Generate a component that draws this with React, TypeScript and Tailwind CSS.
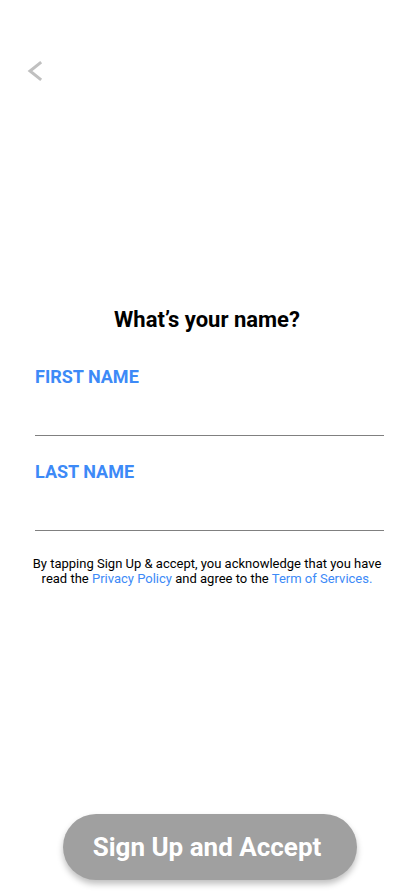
export default function App() {
  return (
    <div className="w-[414px] h-[896px] bg-white flex flex-col" style={{ fontFamily: 'Roboto, "Liberation Sans", sans-serif' }}>
      {/* Back */}
      <div className="pt-[60px] pl-[26px]">
        <button className="w-[18px] h-[22px] flex items-center justify-center">
          <svg width="18" height="22" viewBox="0 0 18 22" fill="none" stroke="#c0c0c0" strokeWidth="3" strokeLinecap="square">
            <path d="M14 3L4 11l10 8" />
          </svg>
        </button>
      </div>

      <h1 className="mt-[224px] text-center text-[22px] leading-[28px] font-bold text-black">What’s your name?</h1>

      <div className="px-[35px] pr-[30px]">
        <label className="block mt-[31px] text-[18px] leading-[24px] font-bold text-[#3d8af7]">FIRST NAME</label>
        <input className="block w-full h-[47px] border-b border-[#808080] outline-none text-[16px]" />

        <label className="block mt-[24px] text-[18px] leading-[24px] font-bold text-[#3d8af7]">LAST NAME</label>
        <input className="block w-full h-[47px] border-b border-[#808080] outline-none text-[16px]" />
      </div>

      <p className="mt-[25px] px-[16px] text-center text-[13px] leading-[15px] text-black">
        By tapping Sign Up &amp; accept, you acknowledge that you have
        <br />
        read the <span className="text-[#3d8af7]">Privacy Policy</span> and agree to the{' '}
        <span className="text-[#3d8af7]">Term of Services.</span>
      </p>

      <div className="flex-1" />

      <div className="flex justify-center pb-[16px] pl-[6px]">
        <button className="w-[294px] h-[66px] pr-[6px] rounded-full bg-[#a0a0a0] text-white text-[26px] font-bold shadow-[0_4px_6px_rgba(0,0,0,0.25)]">
          Sign Up and Accept
        </button>
      </div>
    </div>
  );
}
